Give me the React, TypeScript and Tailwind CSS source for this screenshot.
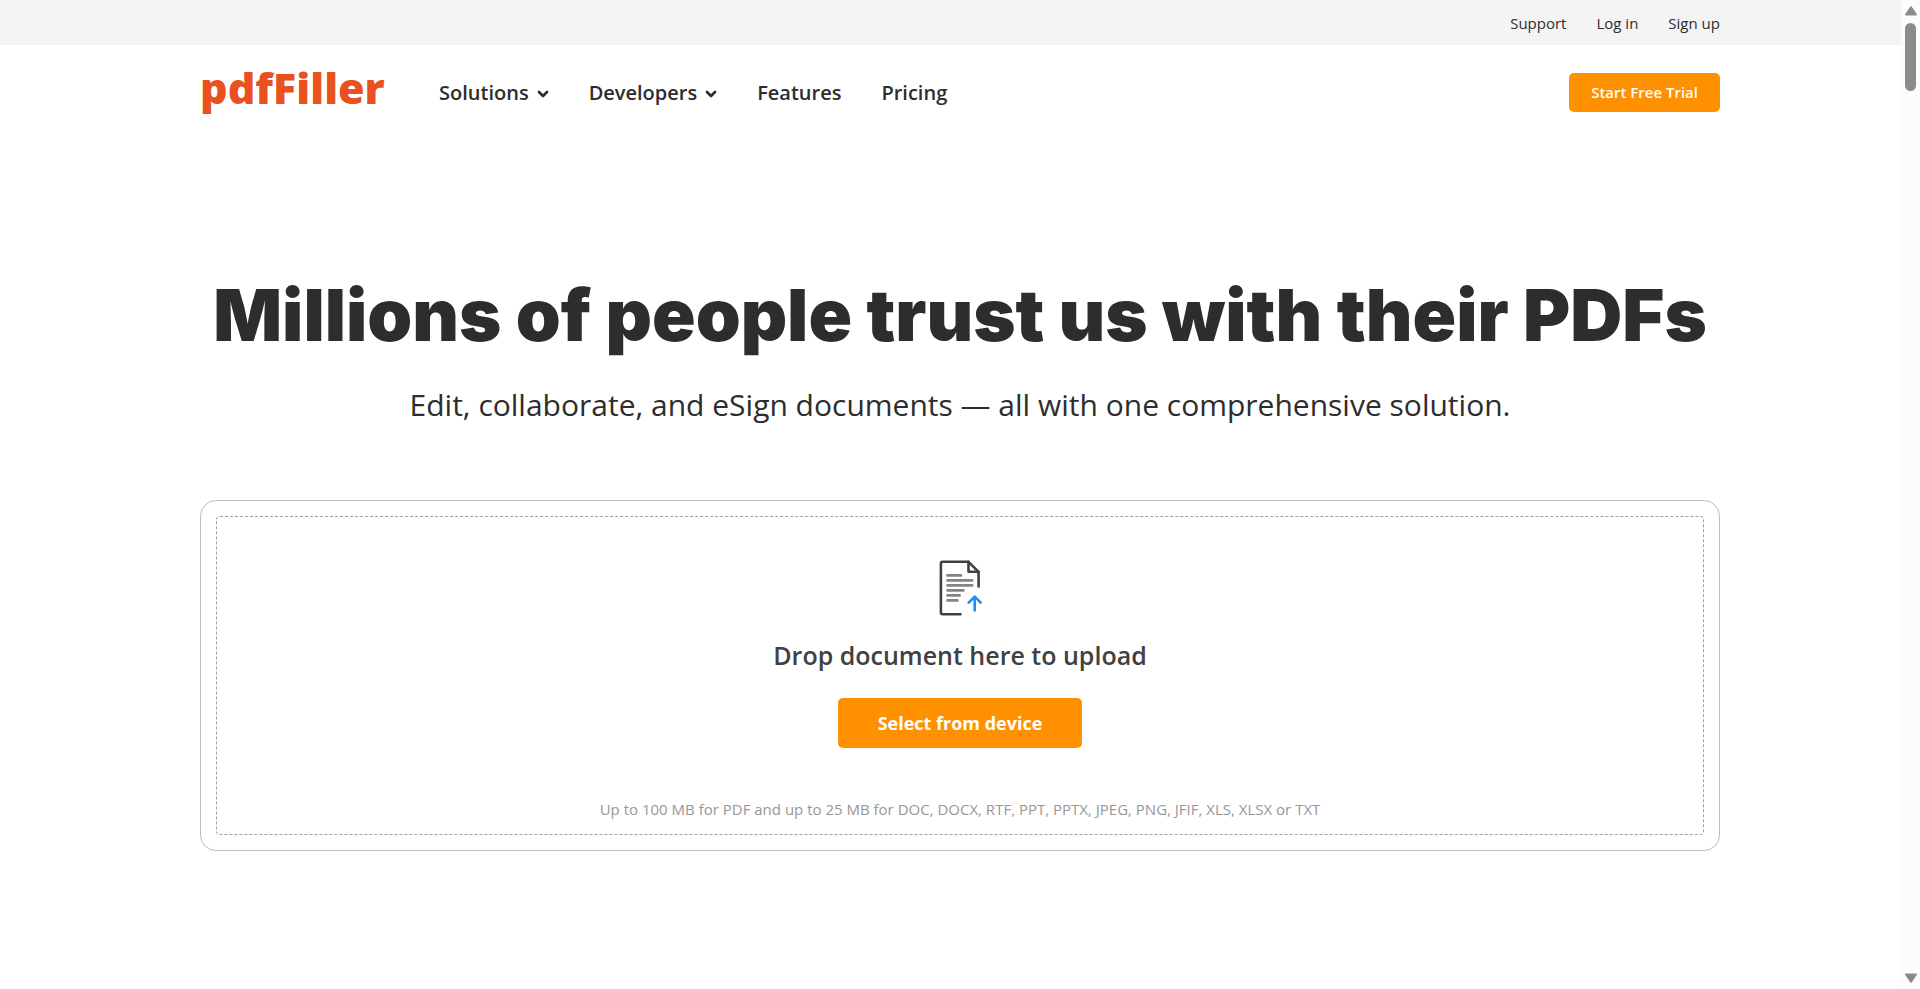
function Chevron() {
  return (
    <svg width="12" height="8" viewBox="0 0 12 8" fill="none" aria-hidden="true" className="mt-0.5">
      <path d="M2 2l4 4 4-4" stroke="#2d2d2d" strokeWidth="2.8" strokeLinecap="round" strokeLinejoin="round" />
    </svg>
  );
}

function UploadIcon() {
  return (
    <svg width="44" height="56" viewBox="0 0 44 56" fill="none" aria-hidden="true">
      <g strokeLinecap="round" strokeLinejoin="round">
        <path
          d="M22.5 54.2H4.5Q2.9 54.2 2.9 52.6V3.4Q2.9 1.8 4.5 1.8H30.5L40.6 11.8V26.5"
          stroke="#414141"
          strokeWidth="2.6"
        />
        <path d="M30.5 1.8V11.8H40.6" stroke="#414141" strokeWidth="2.6" />
        <path
          d="M9.5 15.4H23M9.5 20.4H34.2M9.5 25.4H34.2M9.5 30.4H25.4M9.5 35.4H21.7M9.5 40.4H19.4"
          stroke="#838383"
          strokeWidth="2.6"
        />
        <path d="M36.7 50.5V36.8M30.7 42.6L36.7 36.6L42.7 42.6" stroke="#1d8ff2" strokeWidth="2.6" />
      </g>
    </svg>
  );
}

const utilityLinks = ["Support", "Log in", "Sign up"];

const navItems = [
  { label: "Solutions", menu: true },
  { label: "Developers", menu: true },
  { label: "Features", menu: false },
  { label: "Pricing", menu: false },
];

function PageScrollbar() {
  return (
    <div className="fixed inset-y-0 right-0 flex w-[19px] flex-col items-center bg-[#fcfcfc] py-1.5" aria-hidden="true">
      <svg width="14" height="10" viewBox="0 0 14 10">
        <path d="M7 1L12.2 8.6H1.8Z" fill="#8b8b8b" stroke="#8b8b8b" strokeWidth="1.6" strokeLinejoin="round" />
      </svg>
      <div className="mt-[7px] h-[68px] w-[11px] rounded-full bg-[#8b8b8b]" />
      <svg width="14" height="10" viewBox="0 0 14 10" className="mt-auto">
        <path d="M7 9L12.2 1.4H1.8Z" fill="#8b8b8b" stroke="#8b8b8b" strokeWidth="1.6" strokeLinejoin="round" />
      </svg>
    </div>
  );
}

export default function App() {
  return (
    <div className='min-h-screen bg-white font-["Open_Sans",sans-serif] text-[#2d2d2d]'>
      <div className="bg-[#f4f4f4]">
        <nav className="mx-auto flex h-[45px] max-w-[1520px] items-center justify-end gap-[30px]" aria-label="Account">
          {utilityLinks.map((label) => (
            <a key={label} href="#" className="text-[15px] leading-5">
              {label}
            </a>
          ))}
        </nav>
      </div>

      <header className="mx-auto flex h-[95px] max-w-[1520px] items-center">
        <a href="#" className="w-[239px] pb-2.5 text-[43px] leading-[60px] font-extrabold text-[#ea5120]">
          pdfFiller
        </a>
        <nav className="flex items-center gap-10" aria-label="Main">
          {navItems.map((item) =>
            item.menu ? (
              <button key={item.label} type="button" className="flex items-center gap-2 text-xl font-semibold">
                {item.label}
                <Chevron />
              </button>
            ) : (
              <a key={item.label} href="#" className="text-xl font-semibold">
                {item.label}
              </a>
            ),
          )}
        </nav>
        <button
          type="button"
          className="ml-auto h-[39px] rounded-[5px] bg-[#ff9100] px-[22px] text-[15px] font-semibold text-white"
        >
          Start Free Trial
        </button>
      </header>

      <main className="mx-auto max-w-[1520px] pt-[131px] pb-16 text-center">
        <h1 className='font-["Inter",sans-serif] text-[72px] leading-[88px] font-black'>
          Millions of people trust us with their PDFs
        </h1>
        <p className="mt-[26px] text-3xl leading-10">
          Edit, collaborate, and eSign documents — all with one comprehensive solution.
        </p>
        <section className="mt-[75px] rounded-2xl border border-[#bdbdbd] p-[15px]">
          <div className="flex flex-col items-center rounded border border-dashed border-[#a0a0a0] pt-[43px] pb-[13px]">
            <UploadIcon />
            <h2 className="mt-[19px] text-[25px] leading-10 font-semibold text-[#414141]">
              Drop document here to upload
            </h2>
            <button
              type="button"
              className="mt-[23px] h-[50px] rounded-[5px] bg-[#ff9100] px-10 text-lg font-bold text-white"
            >
              Select from device
            </button>
            <p className="mt-[49px] text-[15px] leading-6 text-[#979797]">
              Up to 100 MB for PDF and up to 25 MB for DOC, DOCX, RTF, PPT, PPTX, JPEG, PNG, JFIF, XLS, XLSX or TXT
            </p>
          </div>
        </section>
      </main>

      <PageScrollbar />
    </div>
  );
}
